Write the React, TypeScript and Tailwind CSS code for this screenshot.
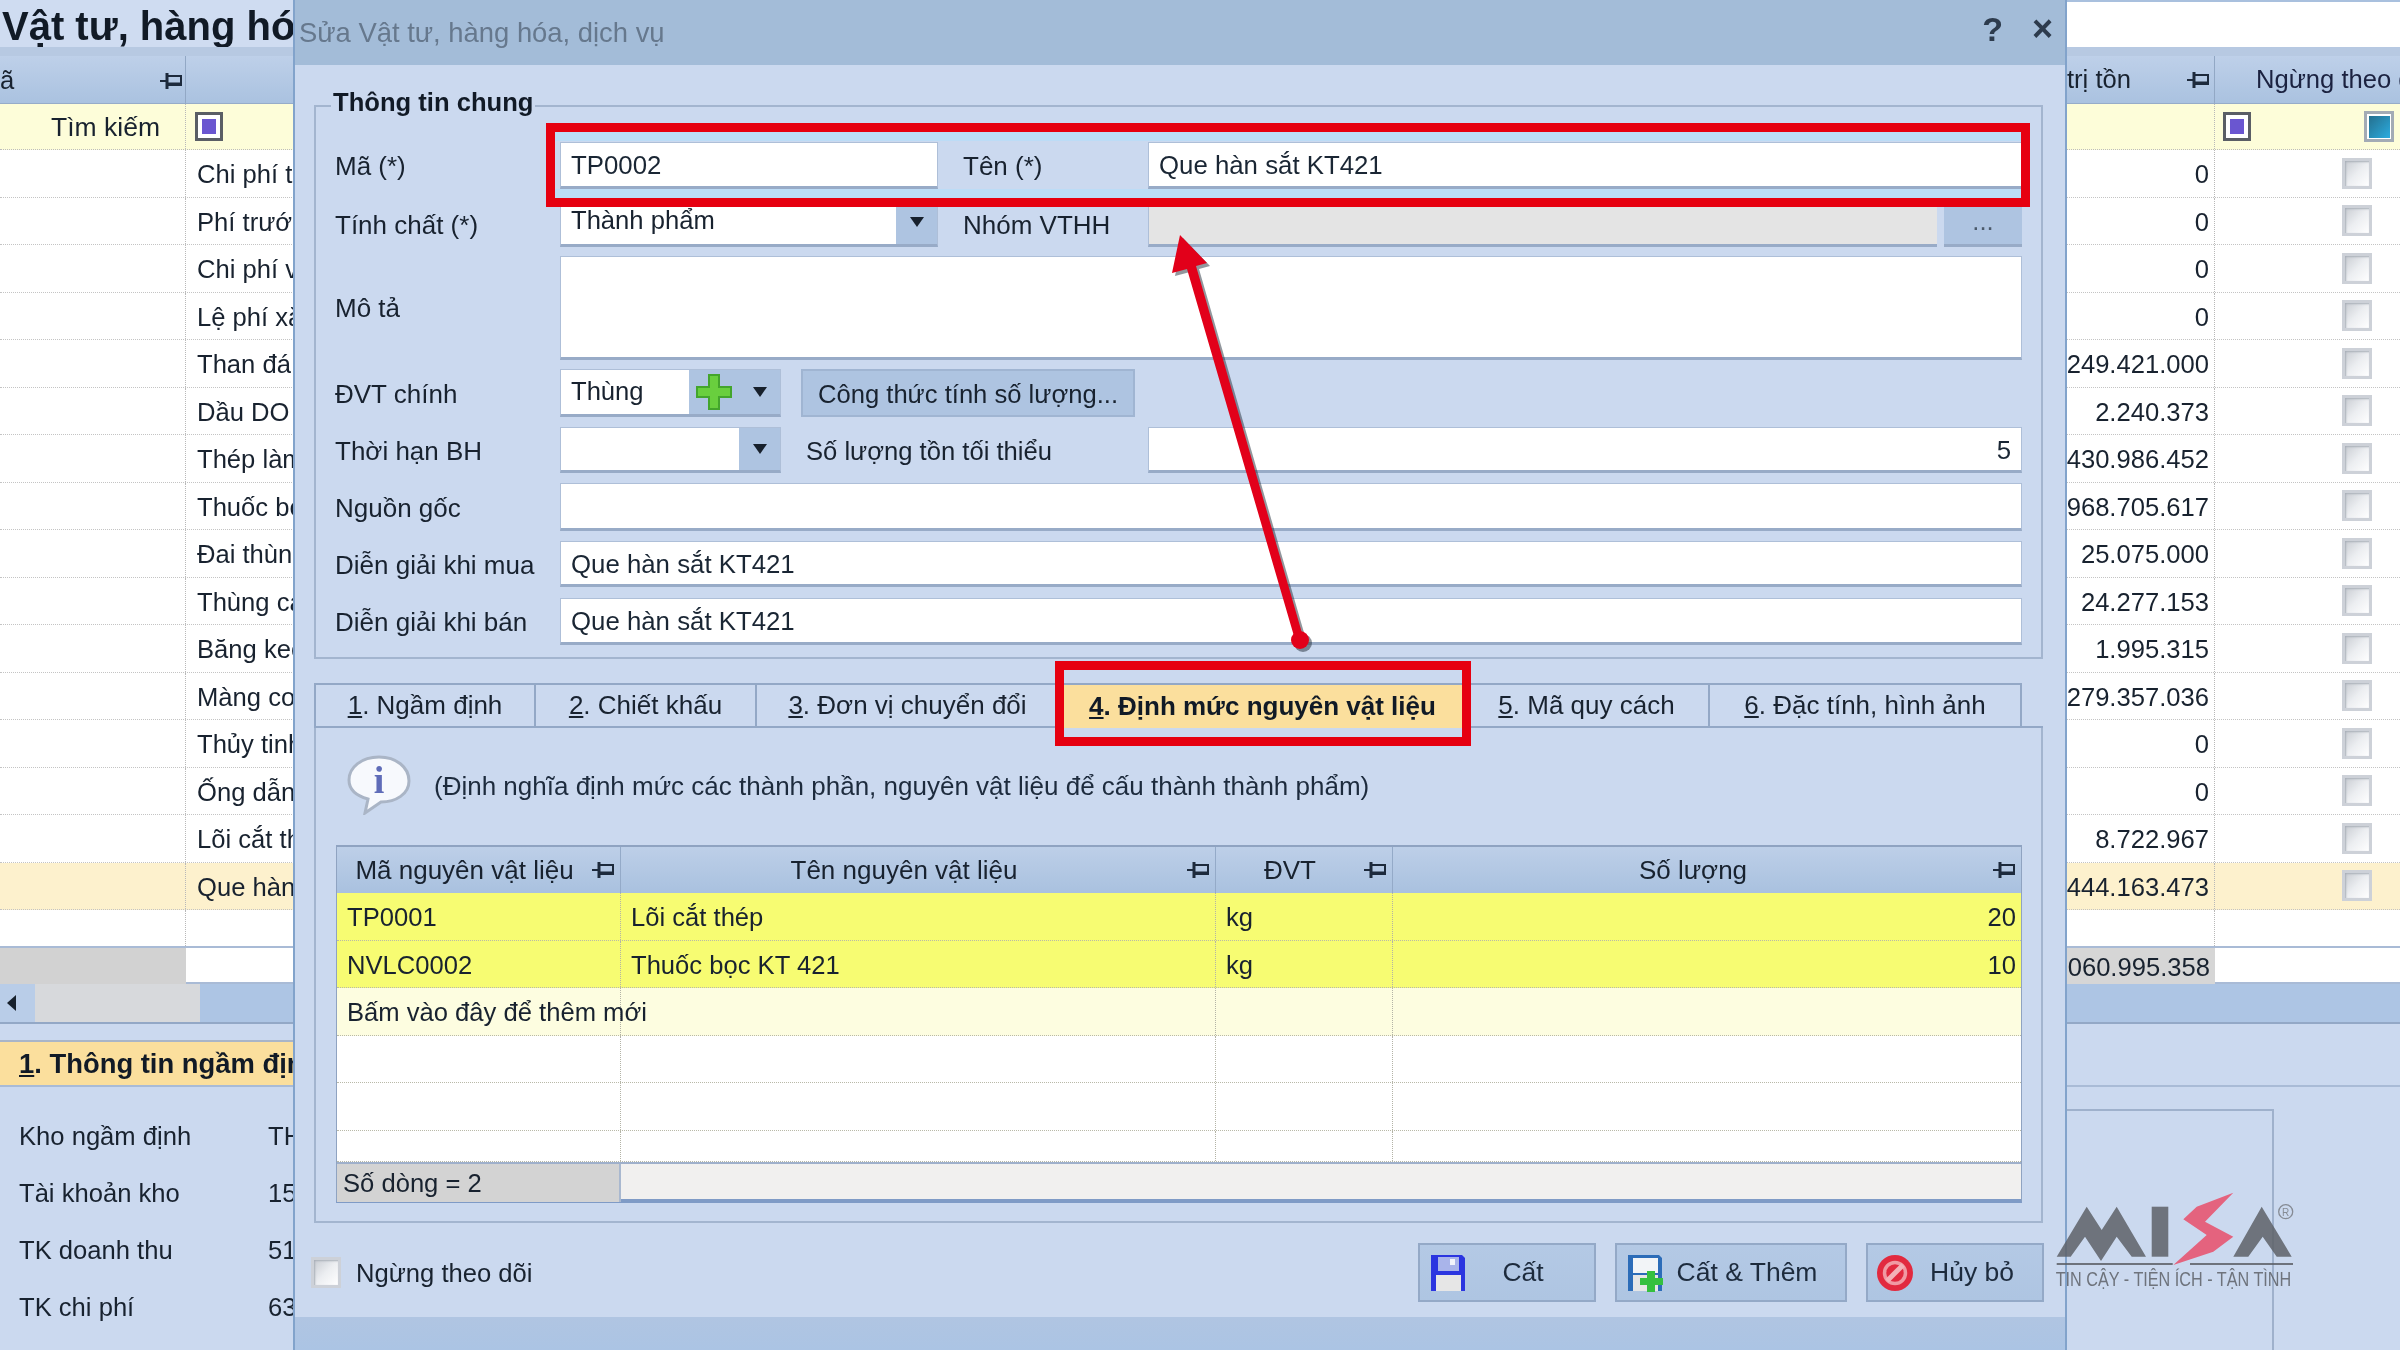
const Pin = () => (
  <svg width="24" height="20" viewBox="0 0 24 20" className="shrink-0" fill="none" stroke="#1d2a3c" strokeWidth="2">
    <path d="M0 10H7" />
    <path d="M7 2V18" strokeWidth="3" />
    <path d="M8 5H21V14H8" />
    <path d="M8 13H22" strokeWidth="3" />
  </svg>
);

const Caret = ({ left = false }: { left?: boolean }) => (
  <svg width="18" height="18" viewBox="0 0 18 18" className="shrink-0">
    {left ? <path d="M12 1V17L3 9Z" fill="#17202c" /> : <path d="M2 4H16L9 14Z" fill="#17202c" />}
  </svg>
);

const Check = () => (
  <div className="w-[30px] h-[31px] border-[3px] border-[#cdd1d8] bg-gradient-to-br from-[#c9cdd3] via-[#eceef1] to-white shadow-[inset_1px_1px_2px_#a9afb8]" />
);

const Marker = ({ teal = false }: { teal?: boolean }) => (
  <div className={teal ? "w-[30px] h-[31px] border-[3px] border-[#a3abb5] bg-white flex items-center justify-center" : "w-[28px] h-[29px] border-[3px] border-[#5a5e65] bg-white flex items-center justify-center"}>
    <div className={teal ? "w-[21px] h-[22px] bg-gradient-to-br from-[#24708f] to-[#2bace0]" : "w-[14px] h-[15px] bg-[#6a56d0]"} />
  </div>
);

const names = ["Chi phí thu mua", "Phí trước bạ", "Chi phí vận chuyển", "Lệ phí xăng", "Than đá", "Dầu DO", "Thép làm que", "Thuốc bọc", "Đai thùng", "Thùng carton", "Băng keo", "Màng co", "Thủy tinh", "Ống dẫn", "Lõi cắt thép", "Que hàn sắt KT421"];
const values = ["0", "0", "0", "0", "1.249.421.000", "2.240.373", "1.430.986.452", "2.968.705.617", "25.075.000", "24.277.153", "1.995.315", "1.279.357.036", "0", "0", "8.722.967", "1.444.163.473"];

const BgRow = ({ name, value, active }: { name: string; value: string; active: boolean }) => (
  <div className={active ? "h-[47.5px] grid grid-cols-[186px_1fr_185px] bg-[#fdf1cd] border-b border-dotted border-[#c4c4c4]" : "h-[47.5px] grid grid-cols-[186px_1fr_185px] bg-white border-b border-dotted border-[#c4c4c4]"}>
    <div className="border-r border-dotted border-[#b8b8b8]" />
    <div className="flex items-center justify-between pl-[11px] pr-[5px] pt-[2px] border-r border-dotted border-[#b8b8b8]">
      <span>{name}</span>
      <span>{value}</span>
    </div>
    <div className="flex items-center pl-[127px]"><Check /></div>
  </div>
);

const Background = () => (
  <div className="flex flex-col h-full bg-[#cbd9ef]">
    <div className="h-[47px] flex bg-[#cfdcf1]">
      <div className="flex-1 text-[40px] font-bold pl-[2px] leading-[52px] text-[#111a26] whitespace-nowrap">Vật tư, hàng hóa, dịch vụ</div>
      <div className="w-[400px] bg-white border-t-2 border-[#a9c0de]" />
    </div>
    <div className="h-[9px] bg-[#b7c9e2]" />
    <div className="h-[48px] grid grid-cols-[186px_1fr_185px] bg-gradient-to-b from-[#bed0e9] to-[#aac2e0] border-b border-[#96acc9]">
      <div className="flex items-center justify-between pr-[1px] pt-[2px] border-r border-[#92a8c5]">
        <span>ã</span>
        <Pin />
      </div>
      <div className="flex items-center justify-end pr-[3px] border-r border-[#92a8c5] gap-[56px]">
        <span>Giá trị tồn</span>
        <Pin />
      </div>
      <div className="pl-[41px] flex items-center whitespace-nowrap overflow-hidden text-[#1b2240]">Ngừng theo dõi</div>
    </div>
    <div className="h-[46px] grid grid-cols-[186px_1fr_185px] bg-[#fdfdd9] border-b border-dotted border-[#bdbdbd]">
      <div className="flex items-center justify-end pr-[25px] pt-[2px] text-[26.5px] border-r border-dotted border-[#b8b8b8]">Tìm kiếm</div>
      <div className="flex items-center justify-between pl-[9px] border-r border-dotted border-[#b8b8b8]">
        <Marker />
        <span />
      </div>
      <div className="flex items-center pl-[8px] gap-[113px]">
        <Marker />
        <Marker teal />
      </div>
    </div>
    {names.map((n, i) => (
      <BgRow key={n} name={n} value={values[i]} active={i === 15} />
    ))}
    <div className="h-[36px] grid grid-cols-[186px_1fr_185px] bg-white">
      <div className="border-r border-dotted border-[#b8b8b8]" />
      <div className="border-r border-dotted border-[#b8b8b8]" />
      <div />
    </div>
    <div className="h-[38px] grid grid-cols-[186px_1fr_185px] bg-white border-y-2 border-[#a9bbd6]">
      <div className="bg-[#d2d2d2]" />
      <div className="flex justify-end">
        <div className="bg-[#d6d6d6] flex items-center pr-[5px] pl-[300px]">1.060.995.358</div>
      </div>
      <div />
    </div>
    <div className="h-[40px] flex bg-[#adc5e4] border-b-2 border-[#93a8c6]">
      <div className="w-[35px] flex items-center justify-start pl-[4px] bg-[#b9cde8]"><Caret left /></div>
      <div className="w-[165px] bg-[#d7d9dc]" />
    </div>
    <div className="flex-1 flex flex-col pt-[16px]">
      <div className="h-[47px] flex border-b-2 border-[#a9bbd6]">
        <div className="w-[400px] bg-[#fbdf9d] border-t-2 border-[#a9b5c8] flex items-center pl-[19px] text-[27.4px] font-bold text-[#111a26] whitespace-nowrap">
          <span><span className="underline">1</span>. Thông tin ngầm định</span>
        </div>
      </div>
      <div className="flex-1 flex pt-[22px]">
        <div className="flex-1 flex flex-col pt-[13px] gap-[29px] pl-[19px]">
          {[["Kho ngầm định", "TH"], ["Tài khoản kho", "15"], ["TK doanh thu", "51"], ["TK chi phí", "63"]].map(([a, b]) => (
            <div key={a} className="flex h-[28px] items-center">
              <span className="w-[249px]">{a}</span>
              <span>{b}</span>
            </div>
          ))}
        </div>
        <div className="w-[400px] mr-[126px] border-t-2 border-r-2 border-[#9fb1cc]" />
      </div>
    </div>
  </div>
);

const Label = ({ w, children, ml, pt = "pt-[2px]" }: { w: string; children: React.ReactNode; ml?: string; pt?: string }) => (
  <div className={`${w} ${ml ?? ""} ${pt} text-[26px] shrink-0 whitespace-nowrap`}>{children}</div>
);

const inputCls = "bg-white border border-[#aebfd8] border-b-[3px] border-b-[#98abc7] flex items-center px-[10px] pt-[2px] text-[25.8px] text-[#1a2634]";

const Combo = ({ w, value, plus }: { w: string; value: string; plus?: boolean }) => (
  <div className={`${w} h-full flex border border-[#aebfd8] border-b-[3px] border-b-[#98abc7]`}>
    <div className="flex-1 bg-white flex items-center pl-[10px] pb-[2px]">{value}</div>
    {plus && (
      <div className="w-[50px] bg-[#aec4e1] flex items-center justify-center">
        <svg width="38" height="38" viewBox="0 0 38 38">
          <path d="M14 2H24V14H36V24H24V36H14V24H2V14H14Z" fill="#69cf3e" stroke="#43a52c" strokeWidth="2" />
        </svg>
      </div>
    )}
    <div className="w-[41px] bg-[#aec4e1] flex items-center justify-center"><Caret /></div>
  </div>
);

const Tab = ({ w, n, text, active }: { w: string; n: string; text: string; active?: boolean }) => (
  <div className={`${w} h-full flex items-center justify-center whitespace-nowrap text-[26px] border-t-2 border-[#93a8c6] ${active ? "bg-[#fbdf9d] font-bold text-[#111a26]" : "border-r-2 border-b-2 bg-[#cbd9ef]"}`}>
    <span><span className="underline">{n}</span>. {text}</span>
  </div>
);

const HeadCell = ({ children, border = true }: { children: React.ReactNode; border?: boolean }) => (
  <div className={`flex items-center pr-[4px] text-[26px] ${border ? "border-r border-[#94aac8]" : ""}`}>
    <span className="flex-1 text-center whitespace-nowrap">{children}</span>
    <Pin />
  </div>
);

const GridRow = ({ a, b, c, d, bg, h = "h-[47.5px]" }: { a?: string; b?: string; c?: string; d?: string; bg: string; h?: string }) => (
  <div className={`${h} ${bg} grid grid-cols-[284px_595px_177px_1fr] border-b border-dotted border-[#b9b9a8]`}>
    <div className="flex items-center pl-[10px] pt-[2px] border-r border-dotted border-[#b3b3a6] whitespace-nowrap">{a}</div>
    <div className="flex items-center pl-[10px] pt-[2px] border-r border-dotted border-[#b3b3a6]">{b}</div>
    <div className="flex items-center pl-[10px] pt-[2px] border-r border-dotted border-[#b3b3a6]">{c}</div>
    <div className="flex items-center justify-end pr-[5px] pt-[2px]">{d}</div>
  </div>
);

const Floppy = ({ green = false }: { green?: boolean }) => (
  <svg width="36" height="38" viewBox="0 0 36 38" className="shrink-0">
    <path d="M1 1H32L35 4V37H1Z" fill={green ? "#2c6cb8" : "#2b35e0"} />
    {green ? (
      <rect x="6" y="4" width="25" height="15" fill="#f2f4f7" />
    ) : (
      <>
        <rect x="8" y="3" width="21" height="14" fill="#a9b4ea" />
        <rect x="20" y="5" width="5" height="6" fill="#f2f4fb" />
      </>
    )}
    <rect x="6" y="21" width="25" height="16" fill="#e6e6e6" />
    {green && <path d="M20 17H28V24H36V31H28V38H20V31H13V24H20Z" fill="#35c03f" />}
  </svg>
);

const Cancel = () => (
  <svg width="38" height="38" viewBox="0 0 38 38" className="shrink-0">
    <circle cx="19" cy="19" r="18" fill="#e22a3f" />
    <circle cx="19" cy="19" r="10.5" fill="none" stroke="#f09aa3" strokeWidth="3.5" />
    <path d="M11 27L27 11" stroke="#f3b2b8" strokeWidth="5" />
  </svg>
);

const Btn = ({ w, icon, label, pl }: { w: string; icon: React.ReactNode; label: string; pl: string }) => (
  <div className={`${w} h-[59px] flex items-center ${pl} text-[26.5px] bg-gradient-to-b from-[#b4c9e5] to-[#aec5e2] border-2 border-[#94a9c7] text-[#1d2b3d]`}>
    {icon}
    <span className="flex-1 text-center whitespace-nowrap">{label}</span>
  </div>
);

const Dialog = () => (
  <div className="absolute left-[293px] top-0 w-[1774px] h-[1350px] flex flex-col bg-[#cbd9ef] border-x-2 border-[#82a3cb]">
    <div className="h-[65px] shrink-0 bg-[#a3bcd8] flex items-center pl-[4px] pr-[12px] text-[27.4px] text-[#66788d]">
      <span className="flex-1">Sửa Vật tư, hàng hóa, dịch vụ</span>
      <span className="font-bold text-[34px] text-[#2d3b4d] mr-[29px] pb-[6px]">?</span>
      <span className="font-bold text-[36px] text-[#2d3b4d] pb-[8px]">×</span>
    </div>
    <div className="flex-1 flex flex-col pl-[19px] pr-[22px]">
      <div className="relative mt-[40px] h-[554px] border-2 border-[#a3b5cf] pl-[19px] pr-[19px] pt-[35px] flex flex-col">
        <div className="absolute left-[15px] -top-[20px] bg-[#cbd9ef] px-[2px] text-[25.6px] font-bold text-[#111a26] leading-[30px]">Thông tin chung</div>
        <div className="h-[47px] flex items-center">
          <Label w="w-[225px]">Mã (*)</Label>
          <div className={`${inputCls} w-[378px] h-full`}>TP0002</div>
          <Label w="w-[185px]" ml="ml-[25px]">Tên (*)</Label>
          <div className={`${inputCls} flex-1 h-full`}>Que hàn sắt KT421</div>
        </div>
        <div className="h-[49px] mt-[9px] flex items-center">
          <Label w="w-[225px]" pt="pt-[5px]">Tính chất (*)</Label>
          <Combo w="w-[378px]" value="Thành phẩm" />
          <Label w="w-[185px]" ml="ml-[25px]" pt="pt-[5px]">Nhóm VTHH</Label>
          <div className="flex-1 h-full bg-[#e4e4e4] border-b-[3px] border-[#98abc7] border-l border-l-[#aebfd8]" />
          <div className="w-[78px] h-full ml-[7px] bg-[#aec4e1] border-b-[3px] border-[#98abc7] flex items-center justify-center text-[#4c5a6b]">...</div>
        </div>
        <div className="h-[104px] mt-[9px] flex items-center">
          <Label w="w-[225px]" pt="pt-0">Mô tả</Label>
          <div className={`${inputCls} flex-1 h-full`} />
        </div>
        <div className="h-[48px] mt-[9px] flex items-center">
          <Label w="w-[225px]">ĐVT chính</Label>
          <Combo w="w-[221px]" value="Thùng" plus />
          <div className="ml-[20px] w-[334px] h-full bg-[#aec4e1] border-2 border-[#a0b5d2] flex items-center justify-center whitespace-nowrap pt-[2px]">Công thức tính số lượng...</div>
        </div>
        <div className="h-[46px] mt-[10px] flex items-center">
          <Label w="w-[225px]">Thời hạn BH</Label>
          <Combo w="w-[221px]" value="" />
          <div className="ml-[25px] w-[342px] pt-[2px] shrink-0 whitespace-nowrap">Số lượng tồn tối thiểu</div>
          <div className={`${inputCls} flex-1 h-full justify-end`}>5</div>
        </div>
        <div className="h-[48px] mt-[10px] flex items-center">
          <Label w="w-[225px]">Nguồn gốc</Label>
          <div className={`${inputCls} flex-1 h-full`} />
        </div>
        <div className="h-[46px] mt-[10px] flex items-center">
          <Label w="w-[225px]">Diễn giải khi mua</Label>
          <div className={`${inputCls} flex-1 h-full`}>Que hàn sắt KT421</div>
        </div>
        <div className="h-[47px] mt-[11px] flex items-center">
          <Label w="w-[225px]">Diễn giải khi bán</Label>
          <div className={`${inputCls} flex-1 h-full`}>Que hàn sắt KT421</div>
        </div>
      </div>

      <div className="h-[45px] mt-[24px] flex border-l-2 border-[#93a8c6]">
        <Tab w="w-[220px]" n="1" text="Ngầm định" />
        <Tab w="w-[221px]" n="2" text="Chiết khấu" />
        <Tab w="w-[303px]" n="3" text="Đơn vị chuyển đổi" />
        <Tab w="w-[405px]" n="4" text="Định mức nguyên vật liệu" active />
        <Tab w="w-[245px]" n="5" text="Mã quy cách" />
        <Tab w="w-[312px]" n="6" text="Đặc tính, hình ảnh" />
        <div className="flex-1 border-b-2 border-[#93a8c6]" />
      </div>
      <div className="h-[495px] border-x-2 border-b-2 border-[#a3b5cf] flex flex-col pl-[20px] pr-[19px]">
        <div className="h-[117px] shrink-0 flex items-center gap-[23px] pl-[11px]">
          <svg width="64" height="60" viewBox="0 0 64 60" className="shrink-0 -mt-[4px]">
            <path d="M32 2C49 2 62 12 62 26C62 39 49 47 34 47L18 58L21 44C10 41 2 35 2 25C2 12 15 2 32 2Z" fill="#f7f9fd" stroke="#aab5c6" strokeWidth="3" />
            <text x="32" y="38" textAnchor="middle" fontFamily="'Liberation Serif', serif" fontWeight="700" fontSize="38" fill="#5f6cb8">i</text>
          </svg>
          <span className="text-[26px] text-[#1d2b3d] whitespace-nowrap">(Định nghĩa định mức các thành phần, nguyên vật liệu để cấu thành thành phẩm)</span>
        </div>
        <div className="h-[358px] border-x border-[#8fa3c1] border-b-[4px] border-b-[#7f9bc6] flex flex-col">
          <div className="h-[48px] shrink-0 grid grid-cols-[284px_595px_177px_1fr] bg-gradient-to-b from-[#bdcfe8] to-[#a9c1df] border-t-2 border-[#8fa3c1]">
            <HeadCell>Mã nguyên vật liệu</HeadCell>
            <HeadCell>Tên nguyên vật liệu</HeadCell>
            <HeadCell>ĐVT</HeadCell>
            <HeadCell border={false}>Số lượng</HeadCell>
          </div>
          <GridRow a="TP0001" b="Lõi cắt thép" c="kg" d="20" bg="bg-[#f7fc72]" />
          <GridRow a="NVLC0002" b="Thuốc bọc KT 421" c="kg" d="10" bg="bg-[#f7fc72]" />
          <GridRow a="Bấm vào đây để thêm mới" bg="bg-[#fdfde0]" />
          <GridRow bg="bg-white" />
          <GridRow bg="bg-white" />
          <GridRow bg="bg-white" h="flex-1" />
          <div className="h-[37px] shrink-0 grid grid-cols-[284px_1fr] border-t-2 border-[#9fb0cb] bg-[#f1f0ef]">
            <div className="bg-[#d3d3d3] flex items-center pl-[6px] border-r-2 border-[#a9b8cf]">Số dòng = 2</div>
            <div />
          </div>
        </div>
      </div>

      <div className="mt-[20px] flex items-center h-[59px]">
        <div className="-ml-[3px]"><Check /></div>
        <span className="ml-[15px] pt-[2px]">Ngừng theo dõi</span>
        <div className="ml-auto flex gap-[19px] -mr-[1px]">
          <Btn w="w-[178px]" icon={<Floppy />} label="Cất" pl="pl-[10px] pr-[14px]" />
          <Btn w="w-[232px]" icon={<Floppy green />} label="Cất & Thêm" pl="pl-[10px] pr-[14px]" />
          <Btn w="w-[178px]" icon={<Cancel />} label="Hủy bỏ" pl="pl-[8px] pr-[12px]" />
        </div>
      </div>
    </div>
    <div className="h-[33px] shrink-0 bg-gradient-to-b from-[#b0c5e2] to-[#abc4e4]" />
  </div>
);

export default function App() {
  return (
    <div className="relative w-[2400px] h-[1350px] overflow-hidden font-['Liberation_Sans',sans-serif] text-[25.6px] text-[#18222f] blur-[0.6px]">
      <Background />
      <Dialog />
      <div className="absolute left-[546px] top-[123px] w-[1484px] h-[84px] border-[9px] border-[#e60010] shadow-[inset_0_9px_0_#bcdcf6,inset_0_-9px_0_#bcdcf6]" />
      <div className="absolute left-[1055px] top-[661px] w-[416px] h-[85px] border-[9px] border-[#e60010]" />
      <svg className="absolute left-0 top-0 pointer-events-none" width="2400" height="1350">
        <g transform="translate(3 3)" fill="#26303c" opacity="0.5">
          <path d="M1180 235L1207 263L1196 266L1304 640L1296 643L1187 269L1172 273Z" />
          <circle cx="1300" cy="640" r="9" />
        </g>
        <path d="M1180 235L1207 263L1196 266L1304 640L1296 643L1187 269L1172 273Z" fill="#e2001a" />
        <circle cx="1300" cy="640" r="9" fill="#e2001a" />
      </svg>
      <div className="absolute left-[2050px] top-[1188px] w-[250px] h-[104px] opacity-85">
        <svg width="250" height="80" viewBox="0 0 250 80">
          <path d="M6.7 68.7L36.7 18.7L51.7 42L66.7 18.7L96 68.7L81.7 68.7L66.7 48.7L51 73L35 48.7L20.7 68.7Z" fill="#5e6268" />
          <rect x="101.7" y="18.7" width="16.6" height="50" fill="#5e6268" />
          <path d="M183.3 4.7L146.7 18.7L133.3 31.3L156.7 47L123.3 77L163.3 63.7L183.3 48.7L155 33.7Z" fill="#e94f6b" />
          <path d="M183.3 68.7L211.7 18.7L241.7 68.7L226.7 68.7L212.7 48.7L198.3 68.7Z" fill="#5e6268" />
          <rect x="6.7" y="75" width="116" height="2" fill="#5e6268" />
          <rect x="140" y="75" width="103" height="2" fill="#5e6268" />
          <circle cx="235.7" cy="23.7" r="7" fill="none" stroke="#7a7e85" strokeWidth="1.3" />
          <text x="235.7" y="27.5" textAnchor="middle" fontSize="10" fill="#7a7e85" fontFamily="'Liberation Sans', sans-serif">R</text>
        </svg>
        <div className="text-[20px] leading-[22px] text-[#5e6268] pl-[7px] whitespace-nowrap origin-left scale-x-[0.81]">TIN CẬY - TIỆN ÍCH - TẬN TÌNH</div>
      </div>
    </div>
  );
}
